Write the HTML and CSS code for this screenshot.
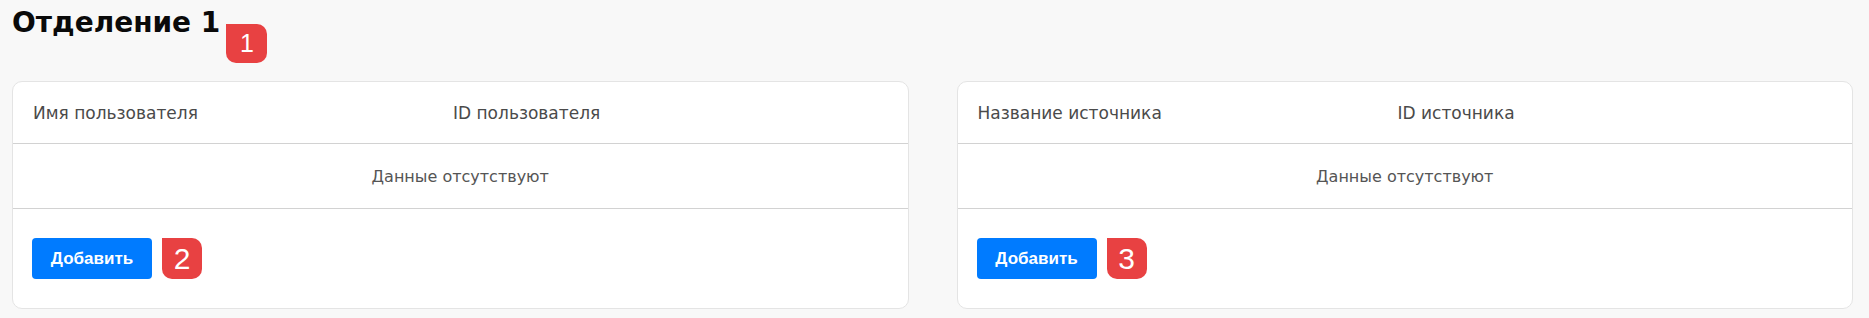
FILE: index.html
```html
<!DOCTYPE html>
<html lang="ru">
<head>
<meta charset="utf-8">
<title>Отделение 1</title>
<link rel="stylesheet" href="styles.css">
</head>
<body>
<div class="page">
  <div class="title-row">
    <h1 class="title">Отделение 1</h1>
    <span class="badge badge-title">1</span>
  </div>
  <div class="grid">
    <section class="card">
      <div class="head">
        <div class="col-first">Имя пользователя</div>
        <div class="col-second">ID пользователя</div>
      </div>
      <div class="empty">Данные отсутствуют</div>
      <div class="foot">
        <button class="btn" type="button">Добавить</button>
        <span class="badge badge-btn">2</span>
      </div>
    </section>
    <section class="card">
      <div class="head">
        <div class="col-first">Название источника</div>
        <div class="col-second">ID источника</div>
      </div>
      <div class="empty">Данные отсутствуют</div>
      <div class="foot">
        <button class="btn" type="button">Добавить</button>
        <span class="badge badge-btn">3</span>
      </div>
    </section>
  </div>
</div>
</body>
</html>
```

FILE: styles.css
```css
* { box-sizing: border-box; }

html, body {
  margin: 0;
  background: #f8f8f8;
}

.page {
  padding: 0 16px 0 12px;
  font-family: "DejaVu Sans", Inter, sans-serif;
}

.title-row {
  display: flex;
  align-items: flex-start;
  height: 81px;
}

.title {
  margin: 0;
  padding-top: 6px;
  font-family: "DejaVu Sans", Inter, sans-serif;
  font-size: 28px;
  line-height: 34px;
  font-weight: 700;
  color: #0a0a0a;
}

.badge {
  display: flex;
  align-items: center;
  justify-content: center;
  background: #e84142;
  color: #fff;
  font-family: "Liberation Sans", Arial, sans-serif;
  border-radius: 0 10px 10px 10px;
}

.badge-title {
  width: 41px;
  height: 39px;
  margin-top: 24px;
  margin-left: 6px;
  font-size: 25px;
}

.badge-btn {
  width: 40px;
  height: 41px;
  font-size: 30px;
}

.grid {
  display: grid;
  grid-template-columns: 1fr 1fr;
  gap: 48px;
}

.card {
  background: #fff;
  border: 1px solid #e4e4e4;
  border-radius: 10px;
}

.head {
  display: flex;
  align-items: center;
  height: 62px;
  padding: 0 20px;
  border-bottom: 1px solid #d2d2d2;
  font-size: 17px;
  color: #4a4a4a;
}

.col-first {
  width: 420px;
  flex: none;
}

.empty {
  display: flex;
  align-items: center;
  justify-content: center;
  height: 65px;
  border-bottom: 1px solid #d2d2d2;
  font-size: 16px;
  color: #555;
}

.foot {
  display: flex;
  align-items: center;
  gap: 10px;
  padding: 29px 19px;
}

.btn {
  width: 120px;
  height: 41px;
  border: none;
  border-radius: 4px;
  background: #007bff;
  color: #fff;
  font-family: "Liberation Sans", Arial, sans-serif;
  font-weight: 700;
  font-size: 17px;
  padding: 0;
}
```
